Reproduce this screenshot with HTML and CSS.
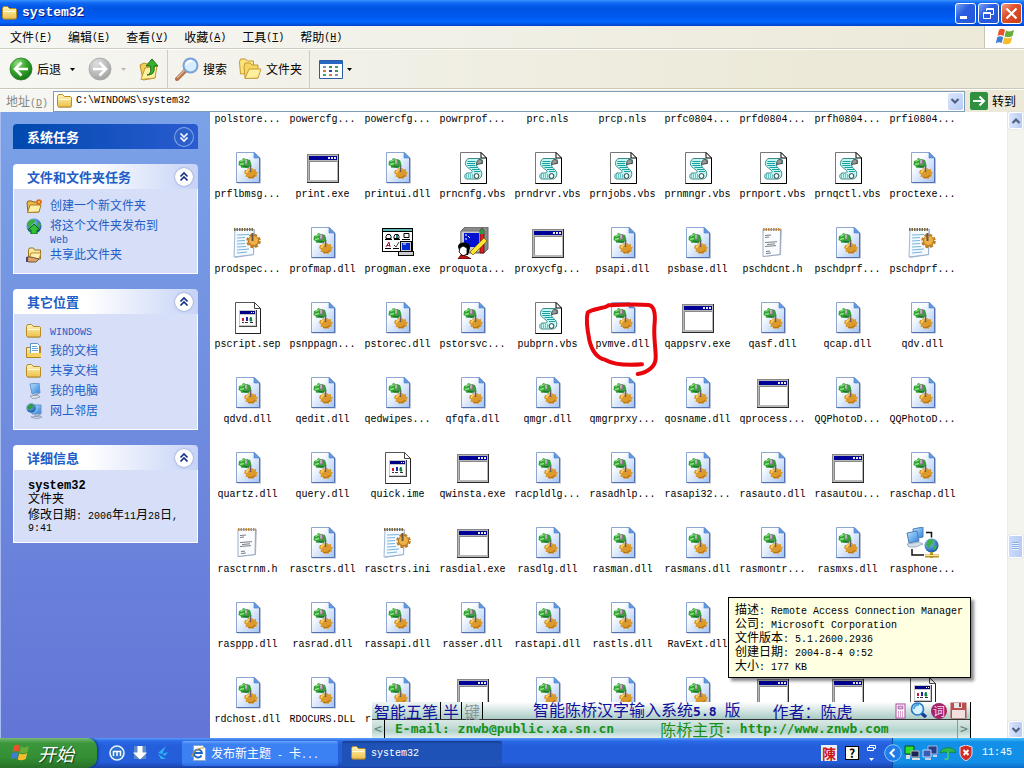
FILE: index.html
```html
<!DOCTYPE html>
<html lang="zh-CN">
<head>
<meta charset="utf-8">
<title>system32</title>
<link rel="stylesheet" href="styles.css">
</head>
<body>
<svg class="sprites" aria-hidden="true">
  <defs>
    <linearGradient id="page" x1="0" y1="0" x2="1" y2="1"><stop offset=".3" stop-color="#fbfdff"/><stop offset="1" stop-color="#a3c3f4"/></linearGradient>
    <linearGradient id="gold" x1="0" y1="0" x2="0" y2="1"><stop offset="0" stop-color="#fff6b8"/><stop offset="1" stop-color="#ecc04a"/></linearGradient>
    <radialGradient id="green" cx=".35" cy=".25" r=".8"><stop offset="0" stop-color="#8fe07c"/><stop offset=".5" stop-color="#36a52c"/><stop offset="1" stop-color="#14741a"/></radialGradient>
    <radialGradient id="grey" cx=".35" cy=".25" r=".8"><stop offset="0" stop-color="#dedede"/><stop offset="1" stop-color="#a2a2a2"/></radialGradient>
    <radialGradient id="globe" cx=".35" cy=".3" r=".8"><stop offset="0" stop-color="#8fd0ff"/><stop offset="1" stop-color="#0d4a9c"/></radialGradient>
    <linearGradient id="screen" x1="0" y1="0" x2="1" y2="1"><stop offset="0" stop-color="#b8e4ff"/><stop offset="1" stop-color="#2f7fdc"/></linearGradient>
  </defs>
  <symbol id="gear" viewBox="0 0 14 14"><circle cx="7" cy="7" r="5" fill="currentColor"/><circle cx="7" cy="7" r="5.500" fill="none" stroke="currentColor" stroke-width="1.800" stroke-dasharray="2.600 1.720"/></symbol>
  <symbol id="dll" viewBox="0 0 33 32">
    <path d="M6.500 1.500H25l5 5V31.500H6.500z" fill="#b9c0d2"/>
    <path d="M5.500.500H23.500L28.500 6V30.500H5.500z" fill="url(#page)" stroke="#8fa5d2"/>
    <path d="M5.500 30.500H28.500V6" fill="none" stroke="#5272b0"/>
    <path d="M23 .500V6H28.500z" fill="#5f9ae0" stroke="#4f82cc" stroke-width=".6"/>
    <path d="M8 9l3-1 1-2 3 1 4 1 1 3 .500 3-3 1-2 1-3-.500-2 .500-1-2-2-1z" fill="#36a03a"/>
    <path d="M9.500 9.500l4-2M9 12.500l4-1" stroke="#86e878" stroke-width="1.300" fill="none"/>
    <path d="M12 14.500l6 .500" stroke="#1a7a28" stroke-width="1.400"/>
    <path d="M14 8l3-1v5l-3 1z" fill="#8d7888"/><path d="M15 7.500v4" stroke="#f4f4f4" stroke-width=".9"/>
    <path d="M14 18l2 0 1-2 2 1 2-1 2 1.500 2-.500v2.500l2 1-1.500 2 .500 2-2.500.500-1 2-2.500-1-2 1-1-2-2.500 0 .500-2.500-2-1.500z" fill="#dc9a2c"/>
    <path d="M15.500 21c0-2.500 3-4 5-3" stroke="#ffd672" stroke-width="1.500" fill="none"/><path d="M17 25c3 1.500 6 0 7-2" stroke="#b87414" stroke-width="1.200" fill="none"/>
    <path d="M19.500 13.500v6.500" stroke="#6a5d60" stroke-width="1.600"/>
  </symbol>
  <symbol id="exe" viewBox="0 0 33 32"><path d="M1 2h32v29H1z" fill="#2a2a2a"/><path d="M1 2h31v28H1z" fill="#868686"/><path d="M2 3h30v27H2z" fill="#b8b8b8"/><path d="M3 4h28v4H3z" fill="#000098"/><path d="M3 9h28v19H3z" fill="#8a8a8a"/><path d="M4 10h27v18H4z" fill="#fff"/><path d="M22 5h2v2h-2zM25 5h2v2h-2zM28 5h2v2h-2z" fill="#e8e8e8"/></symbol>
  <symbol id="vbs" viewBox="0 0 33 32">
    <path d="M4.500.500H25L30.500 6V31.500H4.500z" fill="#fff" stroke="#777"/><path d="M30.500 6v25.500H4.500" fill="none" stroke="#000"/><path d="M25 .500V6h5.500z" fill="#fff" stroke="#000"/>
    <path d="M13 6.500h11c2 0 3 2 2.500 5h-4l-2 1.500c0 3 4 4 5 7 1 4-1 7-4 7H11c-3 0-3-5 0-6h3c2 0 3-1 1-3-4-3-6-4-5.500-7.500.5-2 1.500-4 3.500-4z" fill="#c4f6f2" stroke="#2a7c7c" stroke-width=".9"/>
    <path d="M11.500 9.500h8M11 11.500h8M11.500 13.500h8M13.500 15.500h8M16 17.500h7M18 19.500h6" stroke="#16a0a0"/>
    <path d="M20.500 12.500c0-3 1-5 3.500-5 2 0 2.500 2 2 4z" fill="#9a9a9a" stroke="#333" stroke-width=".8"/><circle cx="20.500" cy="24" r="2.400" fill="#e8ffff" stroke="#222" stroke-width=".9"/><path d="M10 23h7M10 25h7" stroke="#16969a" stroke-dasharray="1 1"/>
  </symbol>
  <symbol id="sep" viewBox="0 0 33 32"><path d="M4.500.500H23.500L29.500 6.500V31.500H4.500z" fill="#fff" stroke="#555"/><path d="M29.500 6.500v25h-25" fill="none" stroke="#222"/><path d="M23.500 .500v6h6z" fill="#fff" stroke="#444"/><path d="M8 8h18v17H8z" fill="#444"/><path d="M8 8h17v16H8z" fill="#c8c8c8"/><path d="M9 9h15v3H9z" fill="#000085"/><path d="M20 10h1v1h-1zM22 10h1v1h-1z" fill="#fff"/><path d="M9 13h15v10H9z" fill="#fff"/><path d="M11 16h2v3h-2z" fill="#c02030"/><path d="M15 15h2v4h-2z" fill="#2020b0"/><path d="M19 16l1-1 1 4h-2z" fill="#108040" stroke="#108040"/><path d="M11 20.500h2m1 0h3m2 0h3" stroke="#333"/></symbol>
  <symbol id="txt" viewBox="0 0 33 32"><path d="M8 3l18-1-1 26-17 2z" fill="#bcc2cc"/><path d="M7 2.500h17.500l-.500 25-17 2z" fill="#fafcff" stroke="#8898b8" stroke-width=".8"/><path d="M7 2.500h18" stroke="#b98b4c" stroke-width="3" stroke-dasharray="1.500 1"/><path d="M9 8.500l6-.500M9 10.500l4-.500M9 15.500l12-.800M11 17.500l8-.700M9 19.500l11-.900M10 24.500l4-.400M10 26.500l5-.500" stroke="#555b66" stroke-width=".8"/></symbol>
  <symbol id="ini" viewBox="0 0 33 32"><path d="M4 3l20-1-1 26-19 3z" fill="#b7bfce"/><path d="M4 2.500h19l-.500 25L3 30z" fill="#f4faff" stroke="#8ba6c8" stroke-width=".8"/><path d="M3 2.500h20" stroke="#7c6a42" stroke-width="3" stroke-dasharray="1.500 1"/><path d="M6 8l12-.500M6 11l8-.500M6 14l8-.500M6 17l8-.500M6 20l9-.500M6 23l12-1M6 26l10-1" stroke="#78b4dc" stroke-width="1"/><use href="#gear" x="13" y="6" width="19" height="16" color="#bd7c22"/><circle cx="22.500" cy="13.500" r="4.500" fill="#eeb047"/><path d="M21.500 6v8" stroke="#66594c" stroke-width="2"/></symbol>
  <symbol id="progman" viewBox="0 0 33 32"><path d="M1 1h31v24H1z" fill="#000"/><path d="M2 2h29v22H2z" fill="#fff"/><path d="M2 2h29v2H2z" fill="#5cb8b4"/><path d="M2 4.500h29" stroke="#000"/><g fill="none" stroke="#000"><path d="M5 9.500l1-2h3l1 2v2H5zM13 9.500l1-2h3l1 2v2h-5zM23 6.500h5v4h-5zM4 12.500h7m2 0h6m2 0h8M4 21.500h6m2 0h6"/></g><path d="M15 8h2v3h-2z" fill="#188"/><path d="M5 20l3-5 1 5M6 18.500h3" stroke="#a01030" fill="none"/><path d="M13 18l2 2 3-5" stroke="#444" fill="none"/><path d="M19 14h12v10h2v5H17v-4h2z" fill="#000"/><path d="M20 15h10v9H20zM18 25h14v3H18z" fill="#ccc"/><path d="M21 16h8v7h-8z" fill="#0028d0"/><path d="M22 17h3" stroke="#fff"/></symbol>
  <symbol id="quota" viewBox="0 0 33 32"><path d="M9 0h23v22l-4 4H5V4z" fill="#8a8a8a" stroke="#666"/><path d="M5 4h22v21H5z" fill="#c8c8c8" stroke="#777"/><path d="M8 6h15v14H8z" fill="#0010d0"/><path d="M10 7v2M10 11v2M12 9l2 2" stroke="#fff"/><path d="M24 4l2-3 2 3v22h-4z" fill="#e02020" stroke="#500" stroke-width=".7"/><path d="M24 4l2-3 2 3v3h-4z" fill="#20a040"/><path d="M14 25L28 11l3 3-14 14z" fill="#ffe430" stroke="#776410" stroke-width=".8"/><path d="M2 20c0-6 12-6 12 1l-2 7H5z" fill="#000"/><path d="M4 21l3-2 4 2v6l-4 2-4-4z" fill="#fff" stroke="#000" stroke-width=".8"/><path d="M2 32l3-4 5 1 5 3z" fill="#c01818" stroke="#500"/></symbol>
  <symbol id="phone" viewBox="0 0 33 32"><path d="M20 5.500h5.500v5M6 22v6h12" fill="none" stroke="#111" stroke-width="1.500"/><path d="M7 2l10-2v10L8 12z" fill="url(#screen)" stroke="#4d7fb8"/><path d="M1 6l10-2 2 10-10 2z" fill="url(#screen)" stroke="#4d7fb8"/><path d="M1 17l12-2 4 2-7 3H3z" fill="#d4deea" stroke="#8296ae" stroke-width=".7"/><circle cx="25.500" cy="18.500" r="7" fill="url(#globe)"/><path d="M22 13c4-2 6 0 5 3s-4 2-3 6l-4-4zM28 19l3-1-1 4-3 1z" fill="#3eb04a"/><path d="M19 29h14M25.500 25v6" stroke="#b99428" stroke-width="3"/><path d="M19 28.500h14" stroke="#ffe68a"/></symbol>
  <symbol id="folder" viewBox="0 0 16 16"><path d="M1 4l1-2h4l2 2h6l1 1v9l-1 1H2l-1-1z" fill="#7b7460" opacity=".4"/><path d="M.500 3.500l1-2h4l2 2h6l1 1v8l-1 1.500h-12l-1-1.500z" fill="url(#gold)" stroke="#b88b24"/><path d="M1.500 6.500h12" stroke="#fffbe0"/></symbol>
  <symbol id="newfolder" viewBox="0 0 16 16"><path d="M1 5l1-2h4l1 1h6v10H2z" fill="#e9b94c" stroke="#8c6618"/><path d="M1.500 14.500L4 7h11l-2 7z" fill="#fff0a8" stroke="#a87b20"/><circle cx="13" cy="4" r="2.800" fill="#e06a1c"/><circle cx="13" cy="4" r="1" fill="#ffd24c"/></symbol>
  <symbol id="web" viewBox="0 0 16 16"><circle cx="8" cy="8" r="7.500" fill="url(#globe)"/><path d="M1 5c4-5 7-4 8-2s-3 2-4 5-4 1-4-3zM11 3l4 4-2 4z" fill="#3cae43"/><path d="M8 6l6 6h-3v4H5v-4H2z" fill="#35bd35" stroke="#0b6a1a"/></symbol>
  <symbol id="share" viewBox="0 0 16 16"><path d="M2.500 3l1-2h4l1 2h6v9h-12z" fill="url(#gold)" stroke="#9c751d"/><path d="M3 12l2-6h10l-2 6z" fill="#fff2ae" stroke="#a87b20" stroke-width=".8"/><path d="M1 10h4l8 2-3 3H3l-2-1z" fill="#dca46c" stroke="#5c3a1c" stroke-width=".8"/><path d="M0 10h2v5H0z" fill="#444b70"/></symbol>
  <symbol id="docs" viewBox="0 0 16 16"><path d="M.500 4.500h4l2-1h8v11H.500z" fill="url(#gold)" stroke="#b08522"/><path d="M4.500.500h7l2 2v8h-9z" fill="#fff" stroke="#5d92c8"/><path d="M6 3.500h5M6 5.500h6M6 7.500h6" stroke="#62a6d8"/><path d="M1 10h14v4H1z" fill="#f5d260"/></symbol>
  <symbol id="computer" viewBox="0 0 16 16"><path d="M4 1l9-1 1 10-8 1z" fill="url(#screen)" stroke="#6a94c8"/><path d="M8 10h4v3H8z" fill="#9dadc4"/><path d="M4 13l8-1 2 2-7 2z" fill="#dbe1ea" stroke="#7788a0" stroke-width=".7"/></symbol>
  <symbol id="network" viewBox="0 0 16 16"><path d="M6 2h9v9H6z" fill="url(#screen)" stroke="#6a94c8"/><circle cx="5" cy="5" r="4.700" fill="url(#globe)"/><path d="M1 4c3-4 6-4 6-1S3 5 4 9z" fill="#2f9c42"/><path d="M9 11h4v2H9zM5 14l9-1 2 1-5 2z" fill="#c9d2df" stroke="#7788a0" stroke-width=".6"/></symbol>
  <symbol id="flag" viewBox="0 0 20 18"><path d="M4 2c2-2 4-1 6 0L8.500 8C6.500 7 5 6.500 2.500 8z" fill="#e9532b"/><path d="M11 2.500c3 1.500 5 1 8-.500l-1.500 6c-3 1.500-5 1.500-8 .500z" fill="#67ad39"/><path d="M2.200 9.200c2-1.200 4-1 6 0L6.700 15c-2-1-4-1-6 .500z" fill="#3e7ed2"/><path d="M9.200 9.500c2.500 1 5 1 8-.500l-1.500 6c-3 1.500-5.500 1.500-8 .500z" fill="#f6bc2e"/></symbol>
  <symbol id="up2" viewBox="0 0 18 18"><path d="M5.500 8.500L9 5l3.500 3.500M5.500 12.500L9 9l3.500 3.500" fill="none" stroke="currentColor" stroke-width="1.700"/></symbol>
  <symbol id="caret" viewBox="0 0 5 3"><path d="M0 0h5L2.500 3z" fill="currentColor"/></symbol>
  <symbol id="chev" viewBox="0 0 10 8"><path d="M1.500 2L5 5.500 8.500 2" fill="none" stroke="#4d6185" stroke-width="2.200"/></symbol>
</svg>

<header class="titlebar">
  <svg class="i16"><use href="#folder"/></svg>
  <h1>system32</h1>
  <div class="winbtns">
    <button class="winbtn" aria-label="最小化"><svg viewBox="0 0 19 19"><path d="M4 12h7v3H4z" fill="#fff"/></svg></button>
    <button class="winbtn" aria-label="还原"><svg viewBox="0 0 19 19"><path d="M7.500 7V4.500h7v6H12M4.500 8.500h7v6h-7zM4.500 9.500h7M7.500 5.500h7" fill="none" stroke="#fff"/></svg></button>
    <button class="winbtn close" aria-label="关闭"><svg viewBox="0 0 19 19"><path d="M4.500 4.500l10 10M14.500 4.500l-10 10" stroke="#fff" stroke-width="2.200"/></svg></button>
  </div>
</header>

<nav class="menubar">
  <div class="menus">
    <button>文件<span class="en">(<u>F</u>)</span></button>
    <button>编辑<span class="en">(<u>E</u>)</span></button>
    <button>查看<span class="en">(<u>V</u>)</span></button>
    <button>收藏<span class="en">(<u>A</u>)</span></button>
    <button>工具<span class="en">(<u>T</u>)</span></button>
    <button>帮助<span class="en">(<u>H</u>)</span></button>
  </div>
  <div class="brand"><svg width="20" height="18"><use href="#flag"/></svg></div>
</nav>

<div class="toolbar">
  <button class="tool"><svg width="24" height="24" viewBox="0 0 24 24"><circle cx="12" cy="12" r="11" fill="url(#green)" stroke="#2c7c27" stroke-width=".8"/><path d="M12.500 5.500L6 12l6.500 6.500M6.500 12H19" fill="none" stroke="#fff" stroke-width="2.600"/></svg>后退</button>
  <button class="drop" aria-label="后退历史"><svg width="5" height="3"><use href="#caret"/></svg></button>
  <button class="tool" aria-label="前进"><svg width="24" height="24" viewBox="0 0 24 24"><circle cx="12" cy="12" r="11" fill="url(#grey)" stroke="#a4a4a4" stroke-width=".8"/><path d="M11.500 5.500L18 12l-6.500 6.500M17.500 12H5" fill="none" stroke="#fff" stroke-width="2.600"/></svg></button>
  <button class="drop off" aria-label="前进历史"><svg width="5" height="3"><use href="#caret"/></svg></button>
  <button class="tool" aria-label="向上"><svg width="22" height="24" viewBox="0 0 22 24"><path d="M2 8l4-2 3 1 8 1v13L5 23z" fill="#f2cd58" stroke="#b98e2c"/><path d="M3 22.500L7 11l12-2-2 12z" fill="#fff1a0" stroke="#c39a34"/><path d="M9 18c4-1 4-5 3.500-9H8l6-7 6 7h-4c1 6-1 9-7 9z" fill="#38b030" stroke="#167016"/></svg></button>
  <span class="rule"></span>
  <button class="tool"><svg width="24" height="24" viewBox="0 0 24 24"><path d="M2 22l9-9" stroke="#b3724e" stroke-width="4" stroke-linecap="round"/><path d="M2 21l8-8" stroke="#e7b795" stroke-width="1.300"/><circle cx="15.500" cy="8.500" r="7" fill="#d5edff" stroke="#7ca0d8" stroke-width="2"/><path d="M11 8c1-3 3-4 6-4" stroke="#fff" stroke-width="2" fill="none"/></svg>搜索</button>
  <button class="tool"><svg width="24" height="22" viewBox="0 0 24 22"><path d="M1.500 4l1-3h5l2 2h6v12l-13 1z" fill="#fbe37e" stroke="#c69a36"/><path d="M6 9l1-4h5l2 2h6v13H7z" fill="#f6d660" stroke="#c69a36"/><path d="M7 20.500L11 11h12l-3 9z" fill="#fff0a0" stroke="#c69a36"/></svg>文件夹</button>
  <span class="rule"></span>
  <button class="tool views" aria-label="查看"><svg width="24" height="19" viewBox="0 0 24 19"><path d="M.500.500h23v18H.500z" fill="#fff" stroke="#2c5ca8"/><path d="M1 1h22v3H1z" fill="#2768c4"/><path d="M4 6h3v2H4zM16 14h3v2h-3z" fill="#7c93b4"/><path d="M10 6h3v2h-3zM16 10h3v2h-3z" fill="#2f9c4c"/><path d="M16 6h3v2h-3zM4 14h3v2H4z" fill="#39a568"/><path d="M4 10h3v2H4zM10 14h3v2h-3z" fill="#d1802f"/><path d="M10 10h3v2h-3z" fill="#2447a0"/></svg><svg width="5" height="3"><use href="#caret"/></svg></button>
</div>

<form class="address">
  <label for="path">地址<span class="en">(<u>D</u>)</span></label>
  <div class="combo"><svg class="i16"><use href="#folder"/></svg><input id="path" type="text" value="C:\WINDOWS\system32"><button type="button" aria-label="展开"><svg width="10" height="8"><use href="#chev"/></svg></button></div>
  <button type="button" class="go"><svg width="18" height="18" viewBox="0 0 18 18"><rect width="18" height="18" rx="2" fill="#2f9140"/><path d="M3 9h11M9.500 4.500L14 9l-4.500 4.500" fill="none" stroke="#fff" stroke-width="2"/></svg>转到</button>
</form>

<main class="workspace">
  <aside class="tasks">
    <section class="panel primary"><h2>系统任务<button aria-label="展开"><svg width="18" height="18"><use href="#up2" transform="rotate(180 9 9)"/></svg></button></h2></section>
    <section class="panel">
      <h2>文件和文件夹任务<button aria-label="折叠"><svg width="18" height="18"><use href="#up2"/></svg></button></h2>
      <ul>
        <li><svg class="i16"><use href="#newfolder"/></svg><a href="#">创建一个新文件夹</a></li>
        <li><svg class="i16"><use href="#web"/></svg><a href="#">将这个文件夹发布到 <span class="en">Web</span></a></li>
        <li><svg class="i16"><use href="#share"/></svg><a href="#">共享此文件夹</a></li>
      </ul>
    </section>
    <section class="panel">
      <h2>其它位置<button aria-label="折叠"><svg width="18" height="18"><use href="#up2"/></svg></button></h2>
      <ul>
        <li><svg class="i16"><use href="#folder"/></svg><a href="#"><span class="en">WINDOWS</span></a></li>
        <li><svg class="i16"><use href="#docs"/></svg><a href="#">我的文档</a></li>
        <li><svg class="i16"><use href="#folder"/></svg><a href="#">共享文档</a></li>
        <li><svg class="i16"><use href="#computer"/></svg><a href="#">我的电脑</a></li>
        <li><svg class="i16"><use href="#network"/></svg><a href="#">网上邻居</a></li>
      </ul>
    </section>
    <section class="panel">
      <h2>详细信息<button aria-label="折叠"><svg width="18" height="18"><use href="#up2"/></svg></button></h2>
      <div class="details">
        <div><strong>system32</strong><p>文件夹</p></div>
        <p>修改日期<span class="en">: 2006</span>年<span class="en">11</span>月<span class="en">28</span>日<span class="en">,</span><br><span class="en">9:41</span></p>
      </div>
    </section>
  </aside>

  <ul class="files" id="files"></ul>

  <div class="scroll">
    <button aria-label="向上滚动"><svg width="10" height="8"><use href="#chev" transform="rotate(180 5 4)"/></svg></button>
    <div class="track"><div class="thumb"></div></div>
    <button aria-label="向下滚动"><svg width="10" height="8"><use href="#chev"/></svg></button>
  </div>

  <div class="tooltip" role="tooltip">
    <p>描述<span class="en">: Remote Access Connection Manager</span></p>
    <p>公司<span class="en">: Microsoft Corporation</span></p>
    <p>文件版本<span class="en">: 5.1.2600.2936</span></p>
    <p>创建日期<span class="en">: 2004-8-4 0:52</span></p>
    <p>大小<span class="en">: 177 KB</span></p>
  </div>

  <div class="ime">
    <div class="ime-row top">
      <button>智能五笔</button><button>半</button><button class="off">键</button>
      <span class="ime-name">智能陈桥汉字输入系统<b>5.8</b>版</span><span class="ime-author">作者：陈虎</span>
      <span class="ime-icons">
        <svg width="12" height="16" viewBox="0 0 12 16"><rect x="1" y="1" width="9" height="14" fill="#fff" stroke="#b0409c"/><path d="M3 3h5v3H3z" fill="#d8b0e0" stroke="#904090" stroke-width=".6"/><path d="M3 9h5M3 11h5M3 13h5" stroke="#b04090" stroke-dasharray="1 1"/></svg>
        <svg width="18" height="17" viewBox="0 0 18 17"><path d="M10 10l6 5" stroke="#153a94" stroke-width="3.500"/><circle cx="7.500" cy="7" r="6" fill="#d8f2ff" stroke="#2878c8" stroke-width="1.700"/><path d="M4 7a4 4 0 0 1 5-4" stroke="#48a8e8" stroke-width="2" fill="none"/></svg>
        <span class="ci">词</span>
        <svg width="17" height="17" viewBox="0 0 17 17"><path d="M.500.500h16v16H.500z" fill="#b85050"/><path d="M4 1h8v5H4z" fill="#e8e8e8"/><path d="M9 1h2v4H9z" fill="#a04040"/><path d="M2 8h13v8H2z" fill="#f4dfe0"/></svg>
      </span>
    </div>
    <div class="ime-row bottom"><button aria-label="上一个">&lt;</button><span class="mail">E-mail: znwb@public.xa.sn.cn</span><span class="home"><i>陈桥主页</i>: http://www.znwb.com</span><button class="next" aria-label="下一个">&gt;</button></div>
  </div>
</main>

<footer class="taskbar">
  <button class="start"><svg width="20" height="18"><use href="#flag"/></svg>开始</button>
  <div class="quick">
    <button aria-label="傲游"><svg width="16" height="16" viewBox="0 0 16 16"><circle cx="8" cy="8" r="7" fill="#2f74cc" stroke="#e6f2ff" stroke-width="1.600"/><path d="M4.500 11V6.500h7V11M8 6.500V11" fill="none" stroke="#fff" stroke-width="1.500"/></svg></button>
    <button aria-label="下载"><svg width="16" height="16" viewBox="0 0 16 16"><path d="M2 1h12v13H2z" fill="#5f8ac8"/><path d="M5.500 1h5v6.500H15l-7 7-7-7h4.500z" fill="#fff"/></svg></button>
    <button aria-label="工具"><svg width="16" height="16" viewBox="0 0 16 16"><path d="M11 1L3 8l4 1zM3 9l8 5-5 0zM7 9l6-2-3 4z" fill="#2cb2f4"/></svg></button>
  </div>
  <button class="task"><svg class="i16" viewBox="0 0 16 16"><path d="M2.500.500h9l3 3v12h-12z" fill="#fff" stroke="#90a8c8"/><path d="M10.500 10.500A4 4 0 1 1 11 8H4" fill="none" stroke="#1d66c8" stroke-width="1.800"/><path d="M1 12C0 8 8 2 13 3" fill="none" stroke="#d8a024"/></svg><span>发布新主题<span class="en"> - </span>卡<span class="en">...</span></span></button>
  <button class="task active"><svg class="i16"><use href="#folder"/></svg><span class="en">system32</span></button>
  <div class="lang">
    <button class="chen">陳</button>
    <button class="help">?</button>
    <button aria-label="语言栏选项"><svg width="9" height="18" viewBox="0 0 9 18"><path d="M2.500 3V1.500h6v3H7M.500 3.500h6v3h-6z" fill="none" stroke="#fff"/><path d="M2 14h5l-2.500 3z" fill="#fff"/></svg></button>
  </div>
  <div class="tray">
    <button class="expand" aria-label="显示隐藏的图标"><svg width="18" height="18" viewBox="0 0 18 18"><circle cx="9" cy="9" r="8.300" fill="#1e7de8" stroke="#85c6ff"/><path d="M10.500 5L6.500 9l4 4" fill="none" stroke="#fff" stroke-width="2"/></svg></button>
    <svg class="i16" viewBox="0 0 16 16"><path d="M1 1h9v8H1z" fill="#2ee02e" stroke="#0a4a20"/><path d="M7 6h8v6H7z" fill="#1b2450" stroke="#bbb"/><path d="M2 10h4v4H2zM8 13h8v2H8z" fill="#ddd"/></svg>
    <svg class="i16" viewBox="0 0 16 16"><path d="M6 1h9v8H6z" fill="#283c88" stroke="#9db8e0"/><path d="M1 5h8v7H1z" fill="#3c5cb4" stroke="#c4d8f4"/><path d="M3 14h6M11 11h4" stroke="#c4d0e4" stroke-width="2"/></svg>
    <svg class="i16" viewBox="0 0 16 16"><path d="M0 8c1-7 15-7 16 0l-4-1-4 1-4-1z" fill="#2fb84c" stroke="#0e7a3a" stroke-width=".7"/><path d="M8 7v6c0 2-3 2-3 0" fill="none" stroke="#49d060" stroke-width="1.500"/></svg>
    <svg class="i16" viewBox="0 0 16 16"><path d="M8 0l6 2v6c0 4-3 6-6 8-3-2-6-4-6-8V2z" fill="#d42a24" stroke="#fff" stroke-width=".8"/><path d="M5.500 5l5 5M10.500 5l-5 5" stroke="#fff" stroke-width="2"/></svg>
    <time>11:45</time>
  </div>
</footer>
<script src="files.js"></script>
</body>
</html>
```

FILE: styles.css
```css
* { box-sizing: border-box; }
body {
  margin: 0;
  height: 100vh;
  display: flex;
  flex-direction: column;
  overflow: hidden;
  font: 12px/14px "Noto Sans CJK SC", sans-serif;
  color: #000;
  background: #fff;
}
h1, h2, p, ul { margin: 0; padding: 0; font-weight: normal; }
ul { list-style: none; }
button { border: 0; padding: 0; background: none; font: inherit; color: inherit; display: flex; align-items: center; white-space: nowrap; }
svg { flex: none; display: block; }
.sprites { position: absolute; width: 0; height: 0; }
.i16 { width: 16px; height: 16px; }
.en { font-family: "Liberation Mono", monospace; font-size: 10px; line-height: 1px; white-space: pre; }

.titlebar {
  display: flex; align-items: center; gap: 4px; height: 26px; flex: none; padding: 0 2px;
  background: linear-gradient(#3a93ff 0, #1068f4 3px, #0054e3 8px, #0058ee 16px, #0066ff 22px, #0040c8 26px);
}
.titlebar h1 { flex: 1; font: bold 13px/16px "Liberation Mono", monospace; color: #fff; text-shadow: 1px 1px #0a1883; }
.winbtns { display: flex; gap: 2px; }
.winbtn { width: 21px; height: 21px; border: 1px solid #fff; border-radius: 3px; background: linear-gradient(135deg, #7aa2f5, #2a5ee0 40%, #2456d8); }
.winbtn.close { background: linear-gradient(135deg, #f0a088, #e0502c 40%, #c83c18); }
.winbtn svg { width: 19px; height: 19px; }

.menubar { display: flex; height: 23px; flex: none; background: linear-gradient(90deg, #f6f6f3, #ece9d8); border-bottom: 1px solid #d0cdbf; }
.menus { flex: 1; display: flex; gap: 16px; padding-left: 10px; }
.brand { width: 40px; display: flex; align-items: center; justify-content: center; background: #fff; border-left: 1px solid #c8c5b4; }

.toolbar { display: flex; align-items: center; height: 40px; flex: none; padding-left: 9px; background: linear-gradient(90deg, #f6f6f3, #ece9d8 80%); border-top: 1px solid #fff; border-bottom: 1px solid #cbc8b8; }
.tool { gap: 4px; margin-right: 9px; }
.drop { margin-right: 13px; }
.drop.off { color: #bbb9ae; margin-right: 12px; }
.rule { align-self: stretch; width: 1px; background: #cfccbc; margin-right: 7px; margin-left: -3px; }
.tool + .tool { margin-left: 2px; }
.tool + .rule { margin-left: -2px; }
.tool.views { margin-left: 2px; }

.address { display: flex; align-items: center; gap: 5px; height: 23px; flex: none; padding: 0 8px 0 6px; border-top: 1px solid #fff; background: linear-gradient(90deg, #f6f6f3, #ece9d8 80%); }
.address label { color: #88867c; }
.combo { flex: 1; display: flex; align-items: center; height: 21px; padding: 0 1px 0 3px; background: #fff; border: 1px solid #7f9db9; }
.combo input { flex: 1; min-width: 0; border: 0; padding: 0 0 0 3px; outline: 0; background: none; font: 10px/14px "Liberation Mono", monospace; color: #000; }
.combo button { width: 15px; height: 17px; justify-content: center; border-radius: 2px; background: linear-gradient(135deg, #dce7fd, #b6caf5); }
.go { gap: 4px; }

.workspace { position: relative; flex: 1; min-height: 0; display: flex; }
.tasks { width: 210px; flex: none; display: flex; flex-direction: column; gap: 15px; padding: 12px; border-left: 1px solid #a8bcf0; background: linear-gradient(#7ba2e7, #6375d6); }
.panel h2 {
  display: flex; align-items: center; justify-content: space-between; height: 25px; padding: 0 5px 0 14px;
  font-size: 13px; line-height: 16px; font-weight: bold; color: #215dc6;
  background: linear-gradient(90deg, #fff 40%, #c6d3f7); border-radius: 4px 4px 0 0;
}
.panel h2 button { width: 18px; height: 18px; border-radius: 9px; background: #fff; color: #16308a; box-shadow: 0 0 2px #6a7fb8; }
.primary h2 { background: linear-gradient(90deg, #0049ae, #2a5bd0); color: #fff; }
.primary h2 button { background: #2c5fc8; color: #fff; box-shadow: 0 0 0 1px #86a8ec; }
.panel ul, .details { background: #d6dff7; border: 1px solid #fff; border-top: 0; }
.panel ul { padding: 6px 12px 9px; }
.panel li { display: flex; gap: 8px; min-height: 20px; padding-top: 3px; line-height: 13px; }
.panel li a { color: #215dc6; text-decoration: none; max-width: 112px; }
.panel li .i16 { margin-bottom: -4px; }
.details { display: flex; flex-direction: column; gap: 4px; padding: 10px 0 10px 14px; line-height: 12px; }
.details strong { display: block; font: bold 12px/12px "Liberation Mono", monospace; }

.files { flex: 1; min-width: 0; overflow: hidden; padding-top: 1px; display: grid; grid-template-columns: repeat(auto-fill, 75px); align-content: start; background: #fff; }
.file { position: relative; display: flex; flex-direction: column; align-items: center; gap: 4px; font: 10px/14px "Liberation Mono", monospace; height: 75px; padding-top: 25px; white-space: nowrap; }
.file.cut { height: 14px; padding: 0; }
.file .icon { width: 33px; height: 32px; }
.file .edge { align-self: flex-start; padding-left: 5px; }
.scrawl { position: absolute; left: -15px; top: 13px; width: 160px; height: 100px; z-index: 1; }

.scroll { width: 17px; flex: none; display: flex; flex-direction: column; background: #f4f4ee; border-left: 1px solid #eeede5; }
.scroll button, .thumb { width: 15px; height: 17px; justify-content: center; background: linear-gradient(90deg, #dce6fd, #b9cbf3); border: 1px solid #fff; border-radius: 2px; box-shadow: 0 0 1px #8ea6d8; }
.track { flex: 1; display: flex; flex-direction: column; }
.track::before { content: ""; flex: 405; }
.track::after { content: ""; flex: 163; }
.thumb { height: 23px; background: repeating-linear-gradient(#8caae6 0 1px, #eef4fe 1px 2px) center / 7px 8px no-repeat, linear-gradient(90deg, #cbdafb, #b9cbf3); }

.tooltip { position: absolute; left: 728px; top: 485px; padding: 4px 7px 5px 6px; border: 1px solid #000; background: #ffffe1; box-shadow: 3px 3px 3px #0007; white-space: nowrap; }

.ime { position: absolute; left: 372px; bottom: 0; width: 599px; }
.ime-row { display: flex; align-items: center; height: 18px; background: linear-gradient(#dbe9e6, #b4d4cd 60%, #e4efed); border-right: 1px solid #000; white-space: nowrap; }
.top { font-size: 16px; line-height: 16px; color: #10109c; border-bottom: 1px solid #333; background: linear-gradient(#fff, #a9cbc5); }
.top button { padding: 0 2px; border-right: 1px solid #000; height: 17px; background: linear-gradient(#eef5f4, #a9cbc5); }
.top .off { color: #8c9694; }
.ime b, .bottom { font-family: "DejaVu Sans Mono", monospace; font-size: 13px; line-height: 16px; font-weight: bold; }
.ime b { margin-right: 8px; }
.ime-name { padding-left: 50px; }
.ime-author { padding-left: 32px; }
.ime-icons { margin-left: auto; padding-right: 3px; display: flex; align-items: center; gap: 3px; }
.ci { width: 16px; height: 16px; border-radius: 8px; background: #a02468; color: #fbd8ec; font-size: 12px; line-height: 16px; text-align: center; }
.bottom { color: #189018; }
.bottom button { width: 13px; height: 18px; justify-content: center; border-right: 1px solid #000; color: #68807c; font-weight: normal; }
.bottom .next { margin-left: auto; border-right: 0; border-left: 1px solid #8a9c98; }
.mail { padding-left: 10px; }
.home { display: flex; align-items: center; padding-left: 46px; }
.home i { font: 16px/16px "Noto Sans CJK SC", sans-serif; }

.taskbar { display: flex; align-items: center; height: 30px; flex: none; color: #fff; background: linear-gradient(#5a9cf8 0, #2a6ae8 3px, #245edb 8px, #245edb 24px, #1941a5 30px); }
.start { width: 97px; height: 30px; padding-left: 10px; gap: 8px; font-size: 18px; font-style: italic; text-shadow: 1px 1px 1px #143c14; border-radius: 0 10px 10px 0; background: linear-gradient(#77b977 0, #3c973c 5px, #338f33 20px, #276f27 30px); box-shadow: 1px 0 3px #0a3070; }
.quick { display: flex; gap: 7px; width: 85px; padding-left: 12px; }
.task { flex: 0 1 160px; min-width: 0; height: 25px; gap: 4px; padding: 0 9px; border-radius: 2px; background: linear-gradient(#6aa4ff 0, #3c81f3 3px, #3c81f3 21px, #2d6ae0); }
.task:not(.active) { flex-basis: 156px; margin-right: 4px; }
.task.active { background: linear-gradient(#163c8c 0, #1e52b7 3px); }
.lang { margin-left: auto; display: flex; align-items: center; gap: 8px; padding-right: 16px; }
.chen { width: 16px; height: 16px; justify-content: center; background: #e8f0f8; color: #d01818; font-size: 14px; line-height: 16px; font-weight: bold; }
.help { width: 14px; height: 14px; justify-content: center; background: #fffff0; color: #000; border: 1px solid #000; font-weight: bold; }
.tray { display: flex; align-items: center; gap: 2px; height: 30px; padding-right: 12px; border-left: 1px solid #0c4a9c; background: linear-gradient(#4cc0f8 0, #1290e8 4px, #1290e8 24px, #0c6cc8 30px); }
.expand { margin-left: -9px; }
.tray time { padding-left: 6px; font: 10px/14px "Liberation Mono", monospace; }
```

FILE: files.js
```js
// One string per row: "icon:name"; an empty icon draws the label only.
const rows = [
  ":polstore... :powercfg... :powercfg... :powrprof... :prc.nls :prcp.nls :prfc0804... :prfd0804... :prfh0804... :prfi0804...",
  "dll:prflbmsg... exe:print.exe dll:printui.dll vbs:prncnfg.vbs vbs:prndrvr.vbs vbs:prnjobs.vbs vbs:prnmngr.vbs vbs:prnport.vbs vbs:prnqctl.vbs dll:proctexe...",
  "ini:prodspec... dll:profmap.dll progman:progman.exe quota:proquota... exe:proxycfg... dll:psapi.dll dll:psbase.dll txt:pschdcnt.h dll:pschdprf... ini:pschdprf...",
  "sep:pscript.sep dll:psnppagn... dll:pstorec.dll dll:pstorsvc... vbs:pubprn.vbs dll:pvmve.dll exe:qappsrv.exe dll:qasf.dll dll:qcap.dll dll:qdv.dll",
  "dll:qdvd.dll dll:qedit.dll dll:qedwipes... dll:qfqfa.dll dll:qmgr.dll dll:qmgrprxy... dll:qosname.dll exe:qprocess... dll:QQPhotoD... dll:QQPhotoD...",
  "dll:quartz.dll dll:query.dll sep:quick.ime exe:qwinsta.exe dll:racpldlg... dll:rasadhlp... dll:rasapi32... dll:rasauto.dll exe:rasautou... dll:raschap.dll",
  "txt:rasctrnm.h dll:rasctrs.dll ini:rasctrs.ini exe:rasdial.exe dll:rasdlg.dll dll:rasman.dll dll:rasmans.dll dll:rasmontr... dll:rasmxs.dll phone:rasphone...",
  "dll:rasppp.dll dll:rasrad.dll dll:rassapi.dll dll:rasser.dll dll:rastapi.dll dll:rastls.dll dll:RavExt.dll : : :",
  "dll:rdchost.dll dll:RDOCURS.DLL dll:r exe: dll: dll: dll: exe: exe: sep:"
];
const scrawl = '<svg class="scrawl" viewBox="0 0 480 300"><path d="M203 252C235 248 256 228 257 205C258 175 249 135 254 100C257 65 250 46 235 45C200 42 150 44 115 46C105 56 65 55 53 68C47 90 54 130 58 150C66 185 82 204 105 209C135 226 180 226 216 223" fill="none" stroke="#e8060c" stroke-width="12" stroke-linecap="round" stroke-linejoin="round"/></svg>';

document.getElementById("files").innerHTML = rows.map((row, r) =>
  row.split(" ").map(entry => {
    const [icon, name] = entry.split(":");
    return `<li class="file${r === 0 ? " cut" : ""}">` +
      (icon ? `<svg class="icon"><use href="#${icon}"/></svg>` : "") +
      `<span${name.length === 1 ? ' class="edge"' : ""}>${name}</span>${name === "pvmve.dll" ? scrawl : ""}</li>`;
  }).join("")
).join("");
```
